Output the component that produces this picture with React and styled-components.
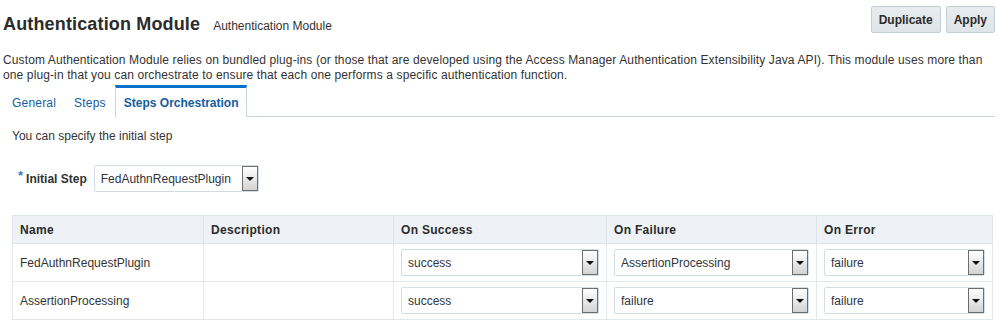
import React from "react";
import styled, { createGlobalStyle } from "styled-components";

const GlobalStyle = createGlobalStyle`
  body {
    margin: 0;
    background: #ffffff;
    font-family: "Liberation Sans", Arial, sans-serif;
    color: #333333;
  }
`;

const Page = styled.div`
  width: 998px;
  padding: 0 3px 0 3px;
  box-sizing: border-box;
`;

const HeaderRow = styled.div`
  display: flex;
  justify-content: space-between;
  align-items: flex-start;
  height: 53px;
`;

const TitleGroup = styled.div`
  display: flex;
  align-items: baseline;
  gap: 13px;
  margin-top: 12px;
`;

const Title = styled.h1`
  margin: 0;
  font-size: 18px;
  line-height: 24px;
  font-weight: bold;
  letter-spacing: 0.15px;
  color: #2b2b2b;
`;

const Subtitle = styled.span`
  font-size: 12px;
  color: #333333;
`;

const ButtonBar = styled.div`
  display: flex;
  gap: 5px;
  margin-top: 6px;
`;

const Button = styled.button`
  height: 27px;
  padding: 0 7px;
  font-family: inherit;
  font-size: 12px;
  font-weight: bold;
  color: #2b2b2b;
  background: linear-gradient(#e8ecef, #dfe4e8);
  border: 1px solid #c4ced7;
  border-radius: 2px;
`;

const Description = styled.p`
  margin: 0;
  font-size: 12px;
  line-height: 15px;
  letter-spacing: 0.12px;
  color: #333333;
`;

const TabStrip = styled.div`
  display: flex;
  margin-top: 2px;
  height: 31px;
  border-bottom: 1px solid #c9d5e0;
`;

const Tab = styled.div`
  display: flex;
  align-items: center;
  padding: 1px 8px 0 8px;
  border: 1px solid transparent;
  border-top: 3px solid ${({ $active }) => ($active ? "#0572ce" : "transparent")};
  border-left-color: ${({ $active }) => ($active ? "#c9d5e0" : "transparent")};
  border-right-color: ${({ $active }) => ($active ? "#c9d5e0" : "transparent")};
  border-bottom: none;
  margin-bottom: -1px;
  background: #ffffff;
  font-size: 12px;
  letter-spacing: ${({ $active }) => ($active ? "0" : "0.2px")};
  font-weight: ${({ $active }) => ($active ? "bold" : "normal")};
  color: #145c9e;
`;

const Content = styled.div`
  padding: 0 2px 0 9px;
`;

const Hint = styled.div`
  font-size: 12px;
  line-height: 15px;
  margin-top: 12px;
`;

const FieldRow = styled.div`
  display: flex;
  align-items: center;
  gap: 7px;
  margin-top: 21px;
  padding-left: 6px;
`;

const Label = styled.label`
  font-size: 12px;
  font-weight: bold;
  color: #333333;
`;

const Required = styled.span`
  color: #3a7fc7;
  font-size: 13px;
  margin-right: 3px;
  position: relative;
  top: -3px;
`;

const SelectBox = styled.div`
  display: flex;
  align-items: stretch;
  width: ${({ $width }) => $width || "auto"};
  height: 27px;
  box-sizing: border-box;
  border: 1px solid #d5dde4;
  border-radius: 2px;
  background: #ffffff;
  font-size: 12px;
  color: #2f3540;
`;

const SelectValue = styled.div`
  flex: 1;
  display: flex;
  align-items: center;
  padding-left: 6px;
`;

const SelectButton = styled.div`
  width: 14px;
  border: 1px solid #6e6e6e;
  background: linear-gradient(#ffffff, #d3d3d3);
  display: flex;
  align-items: center;
  justify-content: center;
`;

const Arrow = styled.span`
  width: 0;
  height: 0;
  border-left: 4px solid transparent;
  border-right: 4px solid transparent;
  border-top: 4px solid #111111;
`;

const Table = styled.table`
  margin-top: 23px;
  width: 981px;
  border-collapse: collapse;
  table-layout: fixed;
  border: 1px solid #d6dee6;
  font-size: 12px;
`;

const Th = styled.th`
  height: 27px;
  padding: 0 7px;
  text-align: left;
  font-weight: bold;
  letter-spacing: 0.3px;
  color: #2b2b2b;
  background: #eef2f6;
  border: 1px solid #dde4ea;
`;

const Td = styled.td`
  height: 37px;
  padding: 0 7px;
  border: 1px solid #e3e8ed;
  color: #333333;
`;

const Select = ({ value, width }) => (
  <SelectBox $width={width}>
    <SelectValue>{value}</SelectValue>
    <SelectButton>
      <Arrow />
    </SelectButton>
  </SelectBox>
);

const rows = [
  { name: "FedAuthnRequestPlugin", success: "success", failure: "AssertionProcessing", error: "failure" },
  { name: "AssertionProcessing", success: "success", failure: "failure", error: "failure" },
];

export default function App() {
  return (
    <Page>
      <GlobalStyle />
      <HeaderRow>
        <TitleGroup>
          <Title>Authentication Module</Title>
          <Subtitle>Authentication Module</Subtitle>
        </TitleGroup>
        <ButtonBar>
          <Button>Duplicate</Button>
          <Button>Apply</Button>
        </ButtonBar>
      </HeaderRow>
      <Description>
        Custom Authentication Module relies on bundled plug-ins (or those that are developed using the Access Manager
        Authentication Extensibility Java API). This module uses more than one plug-in that you can orchestrate to
        ensure that each one performs a specific authentication function.
      </Description>
      <TabStrip>
        <Tab>General</Tab>
        <Tab>Steps</Tab>
        <Tab $active>Steps Orchestration</Tab>
      </TabStrip>
      <Content>
        <Hint>You can specify the initial step</Hint>
        <FieldRow>
          <Label>
            <Required>*</Required>Initial Step
          </Label>
          <Select value="FedAuthnRequestPlugin" width="165px" />
        </FieldRow>
        <Table>
          <colgroup>
            <col style={{ width: 191 }} />
            <col style={{ width: 190 }} />
            <col style={{ width: 213 }} />
            <col style={{ width: 210 }} />
            <col />
          </colgroup>
          <thead>
            <tr>
              <Th>Name</Th>
              <Th>Description</Th>
              <Th>On Success</Th>
              <Th>On Failure</Th>
              <Th>On Error</Th>
            </tr>
          </thead>
          <tbody>
            {rows.map((r) => (
              <tr key={r.name}>
                <Td>{r.name}</Td>
                <Td></Td>
                <Td>
                  <Select value={r.success} />
                </Td>
                <Td>
                  <Select value={r.failure} />
                </Td>
                <Td>
                  <Select value={r.error} />
                </Td>
              </tr>
            ))}
          </tbody>
        </Table>
      </Content>
    </Page>
  );
}
